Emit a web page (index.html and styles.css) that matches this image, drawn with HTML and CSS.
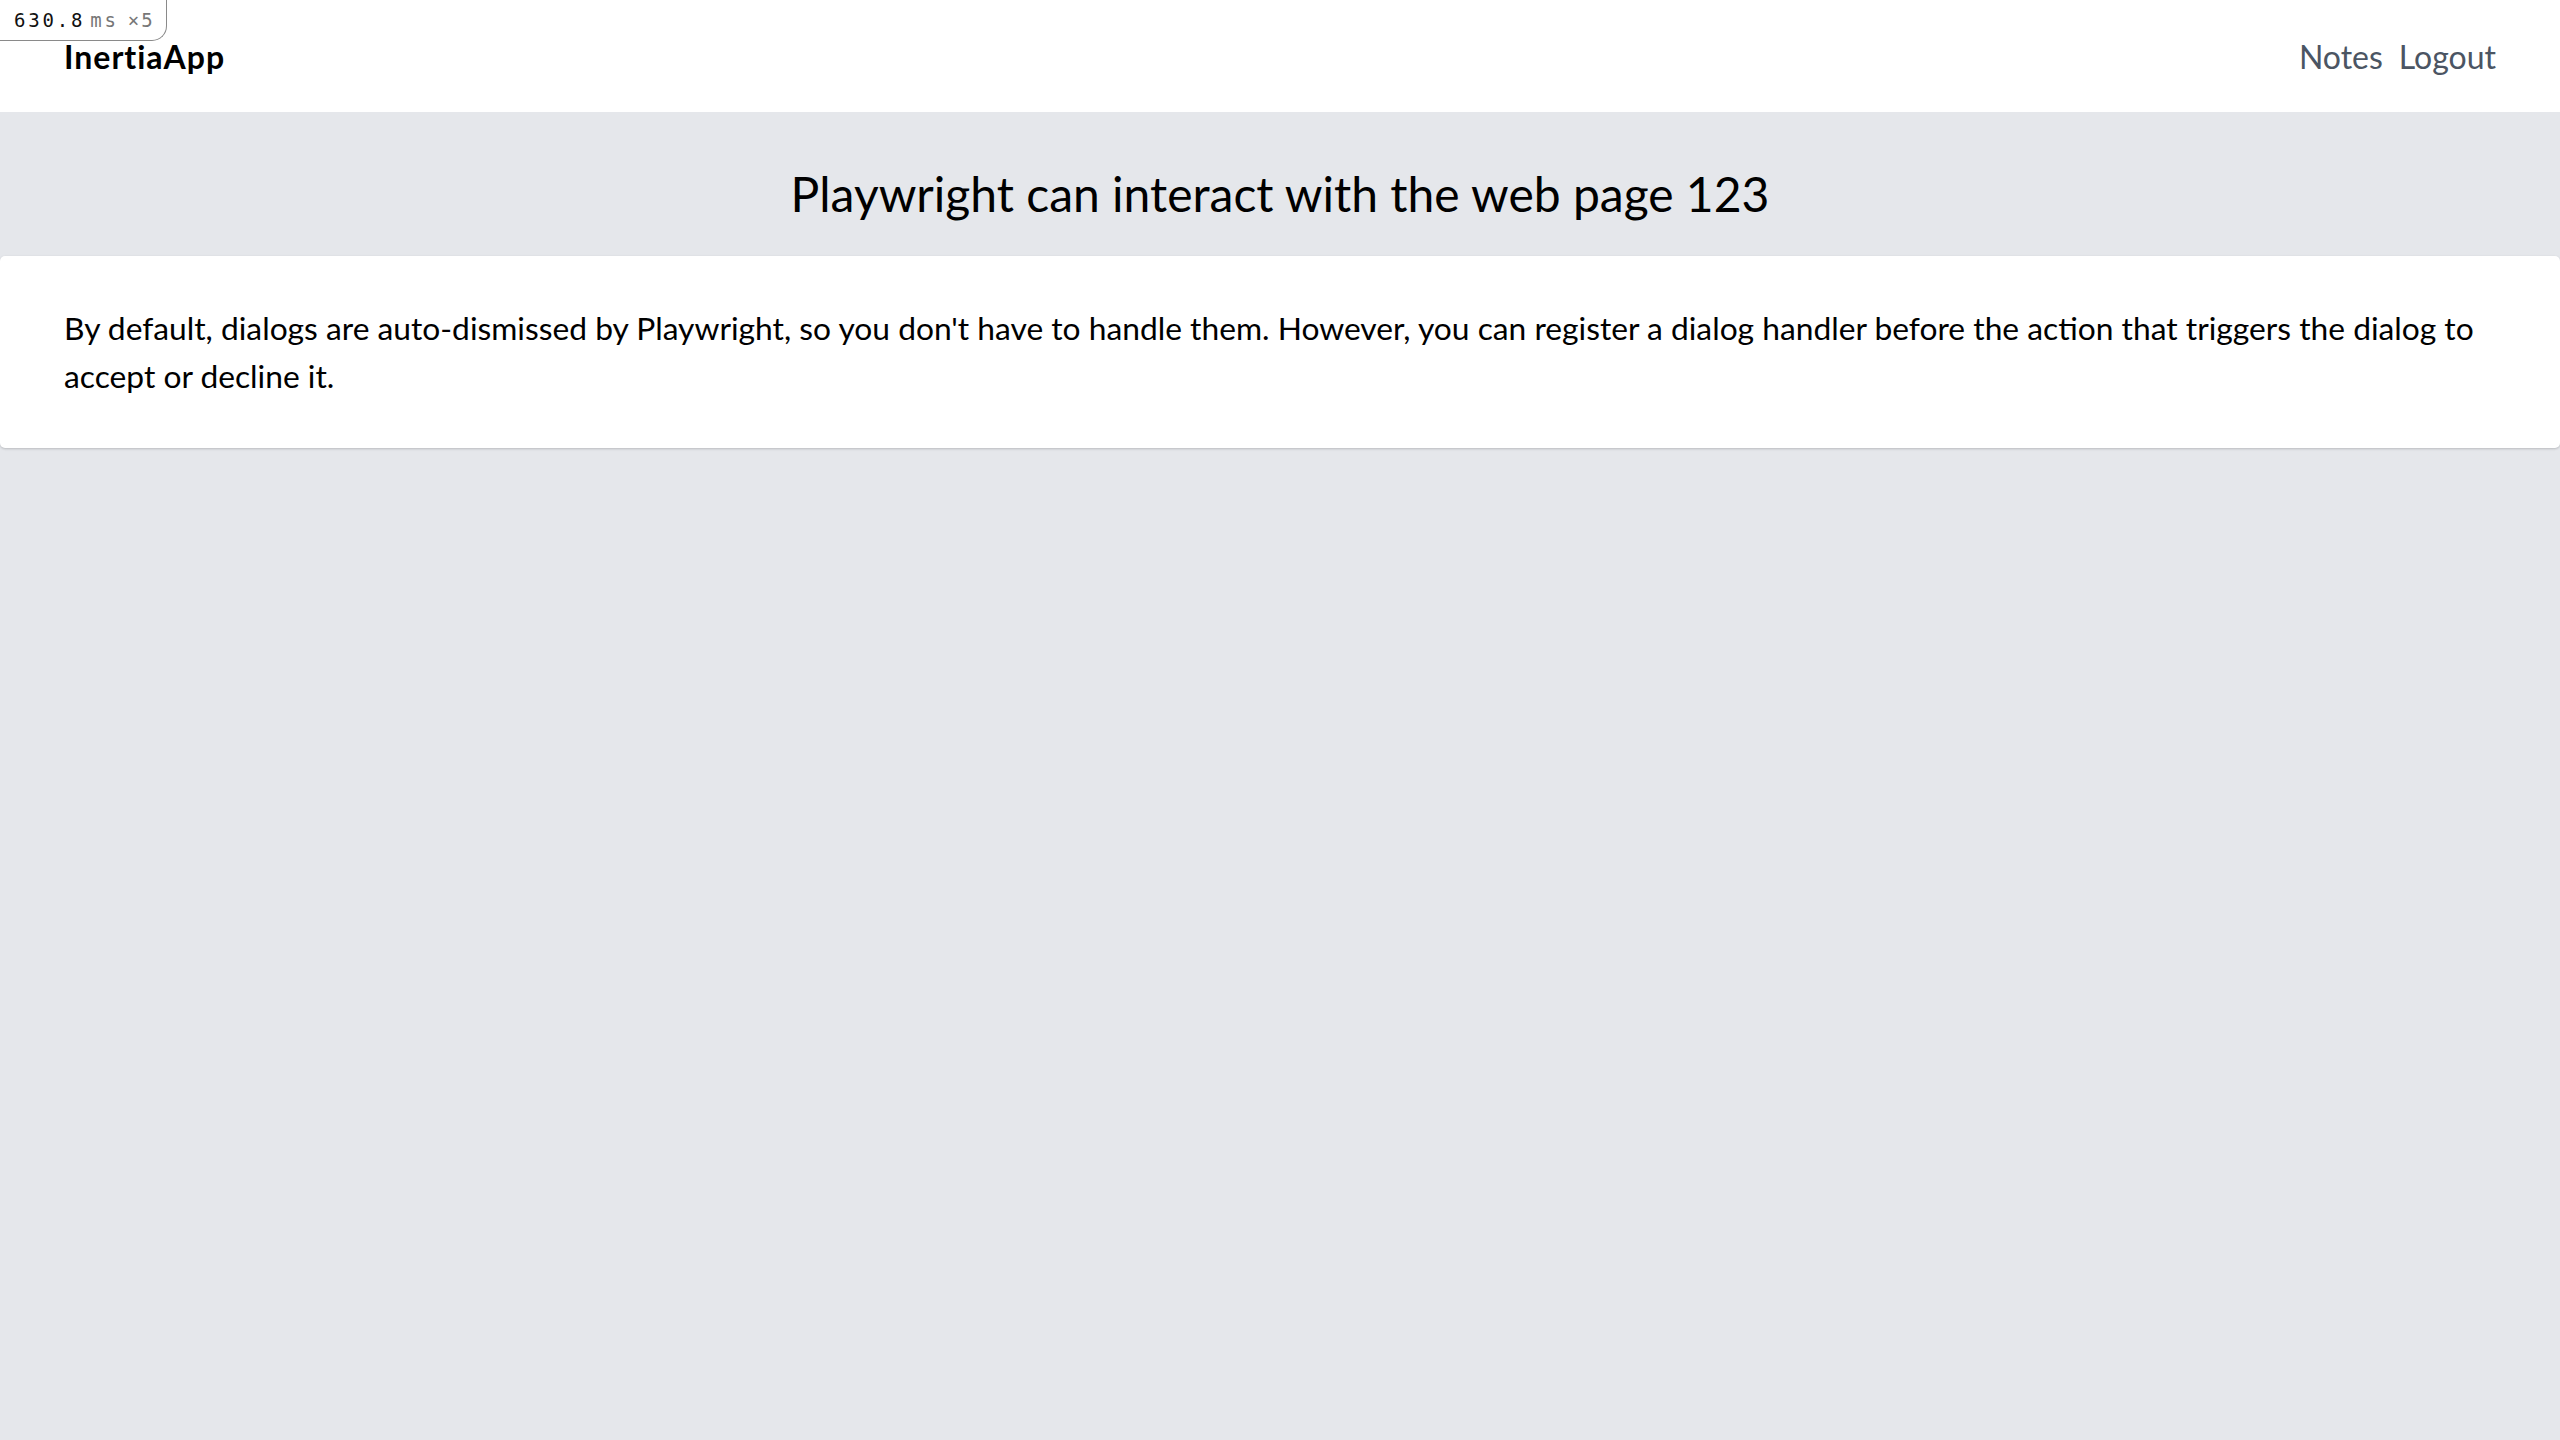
FILE: index.html
```html
<!DOCTYPE html>
<html lang="en">
<head>
<meta charset="utf-8">
<title>InertiaApp</title>
<link rel="stylesheet" href="styles.css">
</head>
<body>
<div class="timing"><span class="timing-value">630.8</span><span class="timing-unit">ms</span><span class="timing-count">×5</span></div>
<header class="topbar">
  <a class="brand" href="#">InertiaApp</a>
  <nav class="nav">
    <a class="nav-link" href="#">Notes</a>
    <a class="nav-link" href="#">Logout</a>
  </nav>
</header>
<main class="main">
  <div class="title-band">
    <h1 class="title">Playwright can interact with the web page 123</h1>
  </div>
  <section class="card">
    <p class="card-text">By default, dialogs are auto-dismissed by Playwright, so you don't have to handle them. However, you can register a dialog handler before the action that triggers the dialog to accept or decline it.</p>
  </section>
</main>
</body>
</html>
```

FILE: styles.css
```css
* { box-sizing: border-box; }

html, body {
  margin: 0;
  padding: 0;
  height: 100%;
}

body {
  background: #e5e7eb;
  font-family: Lato, "Noto Sans", sans-serif;
  color: #111;
  position: relative;
}

a { text-decoration: none; color: inherit; }

.timing {
  position: absolute;
  top: 0;
  left: 0;
  width: 167px;
  height: 41px;
  padding: 0 0 0 14px;
  display: flex;
  align-items: center;
  gap: 5px;
  background: #fff;
  border: 1.5px solid #8a8a8a;
  border-top: none;
  border-left: none;
  border-bottom-right-radius: 15px;
  font-family: "DejaVu Sans Mono", "Liberation Mono", monospace;
  font-size: 19px;
  z-index: 10;
}

.timing-value { color: #111; letter-spacing: 2.8px; }
.timing-unit { color: #777; letter-spacing: 2.8px; }
.timing-count { color: #777; letter-spacing: 2px; margin-left: 4px; }

.topbar {
  height: 112px;
  background: #fff;
  display: flex;
  align-items: center;
  justify-content: space-between;
  padding: 0 64px;
}

.brand {
  font-size: 32px;
  font-weight: 700;
  letter-spacing: 1px;
  color: #000;
}

.nav {
  display: flex;
  gap: 16px;
}

.nav-link {
  font-size: 32px;
  color: #4b5563;
}

.title-band {
  height: 144px;
  display: flex;
  justify-content: center;
  padding-top: 54px;
}

.title {
  margin: 0;
  font-size: 48px;
  font-weight: 400;
  line-height: 56px;
  color: #000;
}

.card {
  background: #fff;
  border-radius: 5px;
  box-shadow: 0 1px 3px rgba(0,0,0,0.12), 0 1px 2px rgba(0,0,0,0.08);
  padding: 48px 64px;
}

.card-text {
  margin: 0;
  font-size: 31.75px;
  line-height: 48px;
  color: #000;
}
```
